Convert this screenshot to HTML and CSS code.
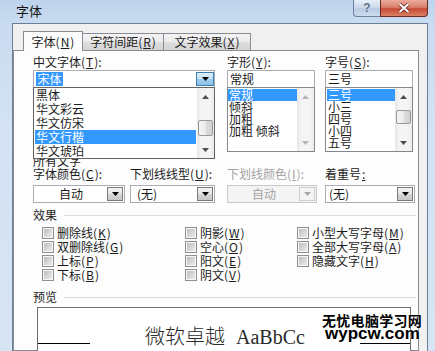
FILE: index.html
```html
<!DOCTYPE html>
<html lang="zh-CN">
<head>
<meta charset="utf-8">
<title>字体</title>
<link rel="stylesheet" href="styles.css">
</head>
<body>
<div class="window">
  <div class="titlebar">
    <span class="title">字体</span>
    <div class="caption-buttons">
      <span class="cbtn help">?</span>
      <span class="cbtn close"><svg width="12" height="10" viewBox="0 0 12 10"><path d="M1.5 1 L10.5 9 M10.5 1 L1.5 9" stroke="#5a1d16" stroke-width="3.4"/><path d="M1.5 1 L10.5 9 M10.5 1 L1.5 9" stroke="#fff" stroke-width="2"/></svg></span>
    </div>
  </div>
  <div class="client">
    <div class="tabs">
      <div class="tab active t1">字体(<u>N</u>)</div>
      <div class="tab t2">字符间距(<u>R</u>)</div>
      <div class="tab t3">文字效果(<u>X</u>)</div>
    </div>
    <div class="panel">
      <div class="fonts-row">
        <div class="col col-font">
          <div class="label">中文字体(<u>T</u>):</div>
          <div class="combo-wrap">
            <div class="combo">
              <span class="val"><span class="sel">宋体</span></span>
              <span class="ddbtn hot"><svg width="7" height="4" viewBox="0 0 7 4"><path d="M0 0h7L3.5 4z" fill="#000"/></svg></span>
            </div>
            <div class="popup">
              <div class="items">
                <div class="item">黑体</div>
                <div class="item">华文彩云</div>
                <div class="item">华文仿宋</div>
                <div class="item sel-item">华文行楷</div>
                <div class="item">华文琥珀</div>
              </div>
              <div class="vscroll">
                <div class="arrow"><svg width="7" height="4" viewBox="0 0 7 4"><path d="M3.5 0L7 4H0z" fill="#4d4d4d"/></svg></div>
                <div class="track"><div class="thumb thumb-font"></div></div>
                <div class="arrow"><svg width="7" height="4" viewBox="0 0 7 4"><path d="M0 0h7L3.5 4z" fill="#4d4d4d"/></svg></div>
              </div>
            </div>
          </div>
        </div>
        <div class="col col-style">
          <div class="label">字形(<u>Y</u>):</div>
          <div class="textbox">常规</div>
          <div class="listbox">
            <div class="litems">
              <div class="litem sel-item">常规</div>
              <div class="litem">倾斜</div>
              <div class="litem">加粗</div>
              <div class="litem">加粗 倾斜</div>
            </div>
            <div class="vscroll">
              <div class="arrow"><svg width="7" height="4" viewBox="0 0 7 4"><path d="M3.5 0L7 4H0z" fill="#b4b4b4"/></svg></div>
              <div class="track"></div>
              <div class="arrow"><svg width="7" height="4" viewBox="0 0 7 4"><path d="M0 0h7L3.5 4z" fill="#b4b4b4"/></svg></div>
            </div>
          </div>
        </div>
        <div class="col col-size">
          <div class="label">字号(<u>S</u>):</div>
          <div class="textbox">三号</div>
          <div class="listbox">
            <div class="litems">
              <div class="litem sel-item">三号</div>
              <div class="litem">小三</div>
              <div class="litem">四号</div>
              <div class="litem">小四</div>
              <div class="litem">五号</div>
            </div>
            <div class="vscroll">
              <div class="arrow"><svg width="7" height="4" viewBox="0 0 7 4"><path d="M3.5 0L7 4H0z" fill="#4d4d4d"/></svg></div>
              <div class="track"><div class="thumb thumb-size"></div></div>
              <div class="arrow"><svg width="7" height="4" viewBox="0 0 7 4"><path d="M0 0h7L3.5 4z" fill="#4d4d4d"/></svg></div>
            </div>
          </div>
        </div>
      </div>

      <div class="group-label">所有文字</div>

      <div class="attr-row">
        <div class="field f-color">
          <div class="label">字体颜色(<u>C</u>):</div>
          <div class="combo"><span class="val center">自动</span><span class="ddbtn"><svg width="7" height="4" viewBox="0 0 7 4"><path d="M0 0h7L3.5 4z" fill="#000"/></svg></span></div>
        </div>
        <div class="field f-uline">
          <div class="label">下划线线型(<u>U</u>):</div>
          <div class="combo"><span class="val pad5">(无)</span><span class="ddbtn"><svg width="7" height="4" viewBox="0 0 7 4"><path d="M0 0h7L3.5 4z" fill="#000"/></svg></span></div>
        </div>
        <div class="field f-ucolor">
          <div class="label disabled">下划线颜色(<u>I</u>):</div>
          <div class="combo disabled"><span class="val center">自动</span><span class="ddbtn"><svg width="7" height="4" viewBox="0 0 7 4"><path d="M0 0h7L3.5 4z" fill="#a8a8a8"/></svg></span></div>
        </div>
        <div class="field f-emph">
          <div class="label">着重号<u>:</u></div>
          <div class="combo"><span class="val pad2">(无)</span><span class="ddbtn"><svg width="7" height="4" viewBox="0 0 7 4"><path d="M0 0h7L3.5 4z" fill="#000"/></svg></span></div>
        </div>
      </div>

      <div class="section">效果</div>
      <div class="effects">
        <div class="check"><span class="cb"></span>删除线(<u>K</u>)</div>
        <div class="check"><span class="cb"></span>双删除线(<u>G</u>)</div>
        <div class="check"><span class="cb"></span>上标(<u>P</u>)</div>
        <div class="check"><span class="cb"></span>下标(<u>B</u>)</div>
        <div class="check"><span class="cb"></span>阴影(<u>W</u>)</div>
        <div class="check"><span class="cb"></span>空心(<u>O</u>)</div>
        <div class="check"><span class="cb"></span>阳文(<u>E</u>)</div>
        <div class="check"><span class="cb"></span>阴文(<u>V</u>)</div>
        <div class="check"><span class="cb"></span>小型大写字母(<u>M</u>)</div>
        <div class="check"><span class="cb"></span>全部大写字母(<u>A</u>)</div>
        <div class="check"><span class="cb"></span>隐藏文字(<u>H</u>)</div>
      </div>

      <div class="section">预览</div>
      <div class="preview">
        <span class="base-line left"></span>
        <div class="sample"><span class="cjk">微软卓越</span><span class="latin">AaBbCc</span></div>
        <span class="base-line right"></span>
      </div>
    </div>
  </div>
  <div class="watermark">
    <div class="wm1">无忧电脑学习网</div>
    <div class="wm2">wypcw.com</div>
  </div>
</div>
</body>
</html>
```

FILE: styles.css
```css
* { box-sizing: border-box; }
html, body { margin: 0; padding: 0; }
body {
  width: 435px;
  height: 351px;
  overflow: hidden;
  font-family: "Noto Sans CJK SC", "Noto Sans", sans-serif;
  font-size: 12px;
  color: #1b1b1b;
}
u { text-decoration: underline; margin: 0 1px; }

.window {
  position: relative;
  width: 435px;
  height: 351px;
  display: flex;
  flex-direction: column;
  background: linear-gradient(to bottom, #bdd3ed 0px, #c9dbf0 22px, #d3e2f3 120px, #d6e4f3 100%);
}

/* title bar */
.titlebar {
  height: 23px;
  flex-shrink: 0;
  display: flex;
  justify-content: space-between;
  align-items: flex-start;
}
.title {
  margin-left: 16px;
  margin-top: 3px;
  font-size: 13px;
  line-height: 16px;
  color: #151515;
}
.caption-buttons { display: flex; margin-right: 7px; }
.cbtn {
  height: 17px;
  display: flex;
  align-items: center;
  justify-content: center;
}
.help {
  width: 27px;
  border: 1px solid #6d82a0;
  border-top: 0;
  border-right: 0;
  border-radius: 0 0 0 4px;
  background: linear-gradient(#e6eef8, #cddbec 45%, #b8cbe3 55%, #cddcee);
  color: #62738a;
  font: bold 12px "Liberation Sans", sans-serif;
}
.close {
  width: 48px;
  border: 1px solid #6b2b25;
  border-top: 0;
  border-radius: 0 0 4px 0;
  background: linear-gradient(#ebab9d, #d9806c 45%, #c64a33 55%, #d88265);
}

/* client */
.client {
  flex: 1;
  margin: 0 7px 0 12px;
  border: 1px solid #6c7f97;
  border-bottom: 0;
  background: #f0f0f0;
  display: flex;
  flex-direction: column;
  min-height: 0;
}
.tabs {
  height: 26px;
  flex-shrink: 0;
  display: flex;
  align-items: flex-end;
  padding-left: 10px;
}
.tab {
  height: 17px;
  border: 1px solid #898c95;
  border-bottom: 0;
  margin-left: -1px;
  padding-top: 1px;
  line-height: 14px;
  text-align: center;
  white-space: nowrap;
  background: linear-gradient(#f4f4f4, #ebebeb 50%, #dedede 51%, #d3d3d3);
}
.tab.t1 { width: 60px; margin-left: 0; }
.tab.t2 { width: 82px; }
.tab.t3 { width: 88px; }
.tab.active {
  height: 20px;
  margin-bottom: -1px;
  padding-top: 3px;
  background: #fcfcfc;
  position: relative;
  z-index: 1;
}

.panel {
  flex: 1;
  margin-right: 8px;
  border: 1px solid #898c95;
  background: #fdfdfd;
  padding: 4px 2px 0 19px;
  min-height: 0;
}

.label { line-height: 14px; height: 14px; white-space: nowrap; margin-bottom: 1px; }
.label.disabled { color: #a3a3a3; }

/* font row */
.fonts-row { display: flex; align-items: flex-start; height: 97px; }
.col-font { width: 182px; }
.col-style { width: 88px; margin-left: 12px; }
.col-size { width: 88px; margin-left: 10px; }

.combo-wrap { position: relative; }
.combo {
  height: 18px;
  border: 1px solid #abadb3;
  background: #fff;
  padding: 1px;
  display: flex;
  white-space: nowrap;
}
.combo .val { flex: 1; line-height: 14px; }
.combo .val.center { text-align: center; }
.combo .val.pad5 { padding-left: 5px; }
.combo .val.pad2 { padding-left: 2px; }
.sel {
  display: inline-block;
  height: 14px;
  line-height: 14px;
  padding: 0 1.5px;
  margin-left: 1px;
  background: #3399ff;
  color: #fff;
}
.ddbtn {
  width: 16px;
  border: 1px solid #7a7a7a;
  background: linear-gradient(#f2f2f2, #e6e6e6 50%, #d5d5d5 51%, #c9c9c9);
  display: flex;
  align-items: center;
  justify-content: center;
}
.ddbtn.hot {
  width: 18px;
  margin-right: -1px;
  border-color: #3c7fb1;
  background: linear-gradient(#e0eef9, #c3e0f6 50%, #a2cdef 51%, #8fc1e9);
}
.combo.disabled { border-color: #c9c9c9; background: #f4f4f4; color: #a3a3a3; }
.combo.disabled .ddbtn { border-color: #cfcfcf; background: #f4f4f4; }

.popup {
  position: absolute;
  left: 0;
  top: 17px;
  width: 182px;
  height: 72px;
  border: 1px solid #646464;
  background: #fff;
  display: flex;
  z-index: 5;
}
.popup .items { flex: 1; }
.item {
  height: 14px;
  line-height: 14px;
  margin: 0 1px;
  padding-left: 1px;
  white-space: nowrap;
}
.sel-item { background: #3399ff; color: #fff; }

.vscroll {
  width: 17px;
  display: flex;
  flex-direction: column;
  background: linear-gradient(to right, #e6e6e6, #f4f4f4 25%, #f4f4f4 75%, #ebebeb);
}
.arrow {
  height: 17px;
  flex-shrink: 0;
  display: flex;
  align-items: center;
  justify-content: center;
}
.track { flex: 1; }
.thumb {
  margin: 0 1px;
  border: 1px solid #979797;
  border-radius: 2px;
  background: linear-gradient(to right, #f4f4f4, #ececec 50%, #dcdcdc 51%, #d2d2d2);
}
.thumb-font { margin-top: 15px; height: 16px; }
.thumb-size { margin-top: 5px; height: 14px; }

.textbox {
  height: 18px;
  border: 1px solid #abadb3;
  background: #fff;
  padding-left: 2px;
  line-height: 16px;
}
.listbox {
  height: 65px;
  margin-top: -1px;
  border: 1px solid #828790;
  background: #fff;
  display: flex;
}
.litems { flex: 1; padding-top: 1px; }
.litem {
  height: 12px;
  line-height: 12px;
  padding-left: 1px;
  white-space: nowrap;
}
.col-size .litem { margin-left: 1px; }

.group-label { margin-top: 2px; height: 13px; line-height: 13px; }

/* attribute row */
.attr-row { display: flex; }
.attr-row .label { margin-bottom: 4px; }
.f-color { width: 92px; }
.f-uline { width: 85px; margin-left: 5px; }
.f-ucolor { width: 90px; margin-left: 12px; }
.f-emph { width: 90px; margin-left: 8px; }

/* sections */
.section {
  display: flex;
  align-items: center;
  height: 14px;
  line-height: 14px;
  margin-top: 5px;
}
.section::after {
  content: "";
  flex: 1;
  height: 1px;
  margin-left: 7px;
  background: #d9dde2;
}
.effects + .section { margin-top: 8px; }

.effects {
  margin-top: 4px;
  padding-left: 9px;
  display: grid;
  grid-template-columns: 143px 112px 1fr;
  grid-template-rows: repeat(4, 14px);
  grid-auto-flow: column;
}
.check {
  display: flex;
  align-items: center;
  line-height: 14px;
  white-space: nowrap;
}
.cb {
  width: 12px;
  height: 12px;
  margin-right: 3px;
  border: 1px solid #8f8f8f;
  padding: 1px;
  background: linear-gradient(135deg, #bdbdbd, #ececec) content-box, #f6f6f6;
}

/* preview */
.preview {
  margin: 3px 0 0 4px;
  width: 374px;
  height: 60px;
  border: 1px solid #6d6d6d;
  background: #fff;
  display: flex;
  align-items: flex-start;
  padding-top: 16px;
}
.base-line { height: 1px; background: #000; margin-top: 19px; }
.base-line.left { width: 52px; }
.base-line.right { width: 50px; }
.sample {
  flex: 1;
  text-align: center;
  font-size: 20px;
  line-height: 24px;
  color: #2a2a2a;
  white-space: nowrap;
}
.sample .cjk { font-weight: 300; }
.sample .latin { font-family: "Liberation Serif", serif; margin-left: 11px; }

/* watermark overlay */
.watermark {
  position: absolute;
  left: 322px;
  top: 313px;
  color: #000;
  font-weight: bold;
  text-shadow: 0 0 2px #fff, 0 0 1px #fff;
}
.wm1 { font-size: 14px; line-height: 15px; letter-spacing: 0.3px; }
.wm2 {
  font-family: "Liberation Sans", Arial, sans-serif;
  font-size: 17px;
  line-height: 15px;
  margin-top: -2px;
  margin-left: 3px;
}
```
